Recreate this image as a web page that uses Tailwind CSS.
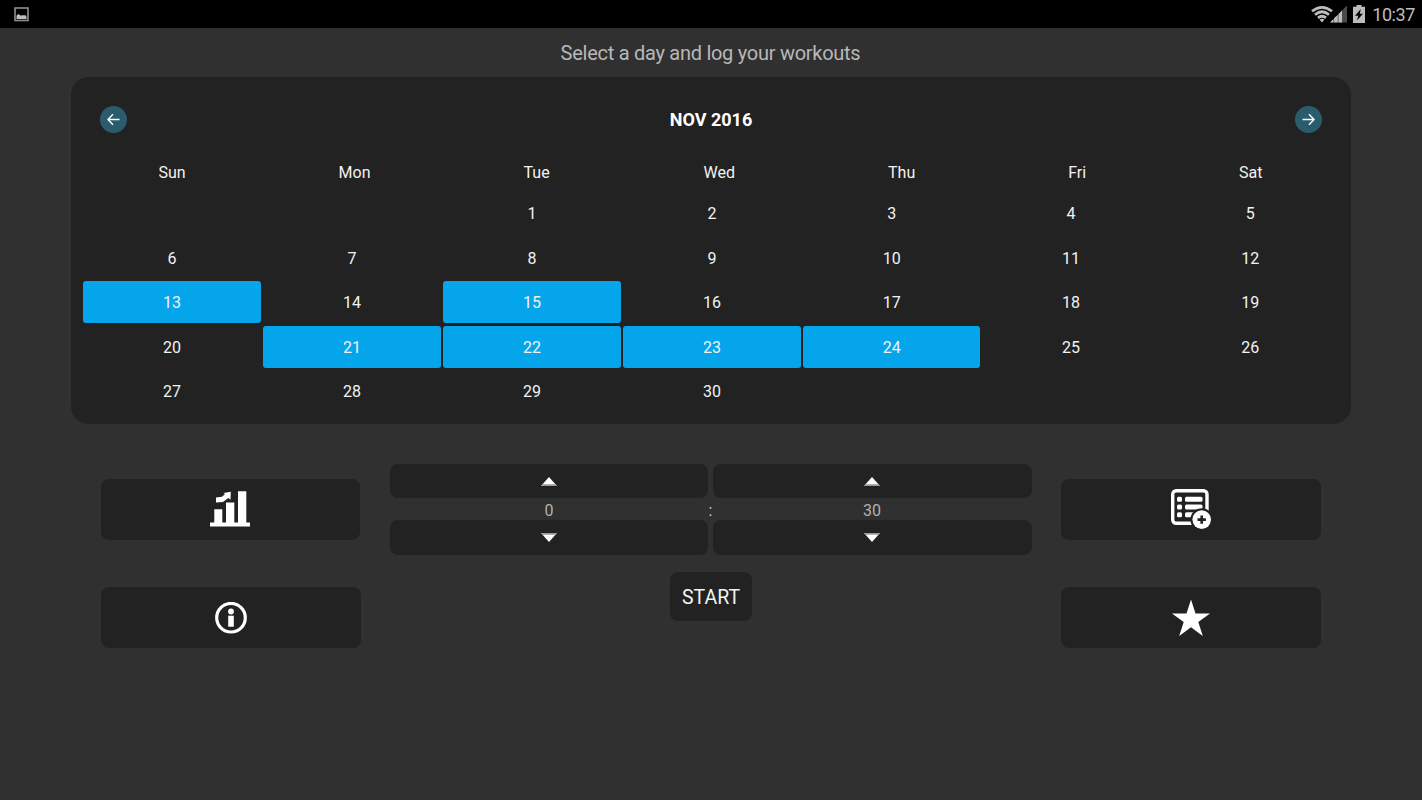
<!DOCTYPE html>
<html lang="en">
  <head>
    <meta charset="UTF-8" />
    <meta name="viewport" content="width=device-width, initial-scale=1.0" />
    <title>Workout Log</title>
    <script src="https://cdn.jsdelivr.net/npm/@tailwindcss/browser@4"></script>
  </head>
  <body class="h-screen overflow-hidden bg-[#303030] font-['Roboto',sans-serif] text-white">

    <!-- status bar -->
    <header class="flex h-7 items-center justify-between bg-black pl-3.5 pr-[7px] text-[#bdbdbd]">
      <svg class="h-[15px] w-[15px]" viewBox="0 0 15 15">
        <rect x="1" y="1" width="13" height="12.5" fill="none" stroke="#8f8f8f" stroke-width="1.6" />
        <path d="M2.5 12V8.500l2-1.500L7 8.800l1.500-.9 1.500.7 1.200-.6L12.500 9.500V12z" fill="#bdbdbd" />
      </svg>
      <div class="flex items-center">
        <svg class="h-[18px] w-[22px]" viewBox="0 0 22 18" fill="none" stroke="#bdbdbd" stroke-width="2.700">
          <path d="M1 6.300Q11-1.700 21 6.300M4 9.700Q11 3.800 18 9.700M7 12.900Q11 9.600 15 12.900" />
          <path d="M8.500 14.500L11 17.500L13.500 14.500Q11 12.800 8.500 14.500z" fill="#bdbdbd" stroke="none" />
        </svg>
        <svg class="-ml-[3px] h-[18px] w-[17px]" viewBox="0 0 17 18">
          <path d="M0 17.500L17 .5V17.500z" fill="#4a4a4a" />
          <path d="M0 17.500L3.500 14V17.500zM4.200 13L7.700 10V17.500H4.200zM8.500 9L12 5.500V17.500H8.500z" fill="#bdbdbd" />
        </svg>
        <svg class="ml-[6px] h-[18px] w-3" viewBox="0 0 12 18">
          <path d="M3.500 0h5v1.800H12V18H0V1.800h3.500z" fill="#bdbdbd" />
          <path d="M7.800 4L2 10.800h3.300L4 15.500l6-6.700H6.800z" fill="#000" />
        </svg>
        <span class="ml-[7px] pt-px text-[18px] leading-7 tracking-[-0.4px]">10:37</span>
      </div>
    </header>

    <h1 class="h-[49px] text-center text-[20px] leading-[51px] tracking-[-0.27px] text-[#b8b8b8] pr-px">Select a day and log your workouts</h1>

    <!-- calendar -->
    <main class="mx-[71px] h-[347px] rounded-[18px] bg-[#222222] px-3">
      <div class="flex h-[84px] items-center justify-between px-[17px]">
        <button class="flex h-[27px] w-[27px] items-center justify-center rounded-full bg-[#2b5c6e]">
          <svg class="h-[13px] w-[13px]" viewBox="0 0 13 13" fill="none" stroke="#fff" stroke-width="1.400"><path d="M12.500 6.500H1M6 1.300L.9 6.500L6 11.700" /></svg>
        </button>
        <h2 class="text-[18px] font-bold">NOV 2016</h2>
        <button class="flex h-[27px] w-[27px] items-center justify-center rounded-full bg-[#2b5c6e]">
          <svg class="h-[13px] w-[13px]" viewBox="0 0 13 13" fill="none" stroke="#fff" stroke-width="1.400"><path d="M.5 6.500H12M7 1.300L12.100 6.500L7 11.700" /></svg>
        </button>
      </div>

      <div class="flex h-[31px] items-start pt-px text-center text-[16px] leading-[22px] text-[#f2f2f2]">
        <div class="flex-auto -translate-x-px">Sun</div>
        <div class="flex-auto -translate-x-px">Mon</div>
        <div class="flex-auto -translate-x-px">Tue</div>
        <div class="flex-auto">Wed</div>
        <div class="flex-auto">Thu</div>
        <div class="flex-auto">Fri</div>
        <div class="flex-auto">Sat</div>
      </div>

      <div class="grid auto-rows-[42px] grid-cols-[repeat(4,178px)_repeat(3,1fr)] gap-x-[2px] gap-y-[2.5px] text-center text-[16px] leading-[44px] text-[#f2f2f2]">
        <div></div>
        <div></div>
        <div>1</div>
        <div>2</div>
        <div>3</div>
        <div>4</div>
        <div>5</div>
        <div>6</div>
        <div>7</div>
        <div>8</div>
        <div>9</div>
        <div>10</div>
        <div>11</div>
        <div>12</div>
        <div class="rounded-[3px] bg-[#05a5eb]">13</div>
        <div>14</div>
        <div class="rounded-[3px] bg-[#05a5eb]">15</div>
        <div>16</div>
        <div>17</div>
        <div>18</div>
        <div>19</div>
        <div>20</div>
        <div class="rounded-[3px] bg-[#05a5eb]">21</div>
        <div class="rounded-[3px] bg-[#05a5eb]">22</div>
        <div class="rounded-[3px] bg-[#05a5eb]">23</div>
        <div class="rounded-[3px] bg-[#05a5eb]">24</div>
        <div>25</div>
        <div>26</div>
        <div>27</div>
        <div>28</div>
        <div>29</div>
        <div>30</div>
      </div>
    </main>

    <!-- actions and timer -->
    <section class="flex justify-between px-[101px] pt-10">
      <div class="flex w-[260px] flex-col gap-[47px] pt-[15px]">
        <button class="flex h-[61px] w-[259px] items-center justify-center rounded-lg bg-[#222222] pb-px pr-px">
          <svg class="h-10 w-10" viewBox="0 0 40 40" fill="#fff">
            <path d="M0 33.500h40v4H0zM4.300 20.300h8V34h-8zM16 13.500h8.300V34H16zM28 2.300h8.300V34H28z" />
            <path d="M6 8.500L12 7.800L15 5L13.500 4L20.800 2.800L20.500 10.800L18.300 9L13 13L6 13.500z" />
          </svg>
        </button>
        <button class="flex h-[61px] items-center justify-center rounded-lg bg-[#222222]">
          <svg class="h-8 w-8" viewBox="0 0 32 32">
            <circle cx="16" cy="15.700" r="14.300" fill="none" stroke="#fff" stroke-width="3.200" />
            <circle cx="16" cy="9.500" r="2.900" fill="#fff" />
            <path d="M13.200 13.700h5.600v11h-5.600z" fill="#fff" />
          </svg>
        </button>
      </div>

      <div class="flex w-[642px] flex-col items-center">
        <div class="flex w-full justify-between">
          <div class="w-[318px]">
            <button class="flex h-[34px] w-full items-center justify-center rounded-lg bg-[#222222]">
              <svg class="h-[9px] w-4" viewBox="0 0 16 9"><path d="M8 0L16 9H0z" fill="#fff" /><path d="M1.500 7.300h13L16 9H0z" fill="#999" /></svg>
            </button>
            <div class="h-[22px] text-center text-[16px] leading-[26px] text-[#b0b0b0]">0</div>
            <button class="flex h-[35px] w-full items-center justify-center rounded-lg bg-[#222222]">
              <svg class="h-[9px] w-4" viewBox="0 0 16 9"><path d="M8 9L16 0H0z" fill="#fff" /><path d="M1.500 1.700h13L16 0H0z" fill="#999" /></svg>
            </button>
          </div>
          <div class="w-[5px] pt-[34px] text-center text-[16px] leading-[26px] text-[#c8c8c8]">:</div>
          <div class="w-[319px]">
            <button class="flex h-[34px] w-full items-center justify-center rounded-lg bg-[#222222] pr-px">
              <svg class="h-[9px] w-4" viewBox="0 0 16 9"><path d="M8 0L16 9H0z" fill="#fff" /><path d="M1.500 7.300h13L16 9H0z" fill="#999" /></svg>
            </button>
            <div class="h-[22px] pr-px text-center text-[16px] leading-[26px] text-[#b0b0b0]">30</div>
            <button class="flex h-[35px] w-full items-center justify-center rounded-lg bg-[#222222] pr-px">
              <svg class="h-[9px] w-4" viewBox="0 0 16 9"><path d="M8 9L16 0H0z" fill="#fff" /><path d="M1.500 1.700h13L16 0H0z" fill="#999" /></svg>
            </button>
          </div>
        </div>
        <button class="mt-[17px] h-[49px] w-[82px] rounded-lg bg-[#222222] pt-0.5 text-[19.5px] text-[#f2f2f2]">START</button>
      </div>

      <div class="flex w-[260px] flex-col gap-[47px] pt-[15px]">
        <button class="flex h-[61px] items-center justify-center rounded-lg bg-[#222222] pb-px">
          <svg class="h-10 w-10" viewBox="0 0 40 40">
            <rect x="1.700" y="1.700" width="34.300" height="32.500" rx="3.500" fill="none" stroke="#fff" stroke-width="3.400" />
            <g fill="#fff">
              <rect x="6" y="7.700" width="5" height="5" rx="1.500" />
              <rect x="6" y="15.500" width="5" height="5" rx="1.500" />
              <rect x="6" y="23.200" width="5" height="5" rx="1.500" />
              <rect x="14" y="7.700" width="17.500" height="5" rx="1.500" />
              <rect x="14" y="15.500" width="17.500" height="5" rx="1.500" />
              <rect x="14" y="23.200" width="12" height="5" rx="1.500" />
            </g>
            <circle cx="30.700" cy="30.600" r="11.300" fill="#222" />
            <circle cx="30.700" cy="30.600" r="9.300" fill="#fff" />
            <path d="M30.700 26.400v8.400M26.500 30.600h8.400" stroke="#222" stroke-width="2.600" />
          </svg>
        </button>
        <button class="flex h-[61px] items-center justify-center rounded-lg bg-[#222222]">
          <svg class="mt-px h-[38px] w-10" viewBox="0 0 40 38" fill="#fff">
            <path d="M20 .5L24.500 14.500H39L27.300 23L31.800 37L20 28.300L8.200 37L12.700 23L1 14.500H15.500z" />
          </svg>
        </button>
      </div>
    </section>
  </body>
</html>
